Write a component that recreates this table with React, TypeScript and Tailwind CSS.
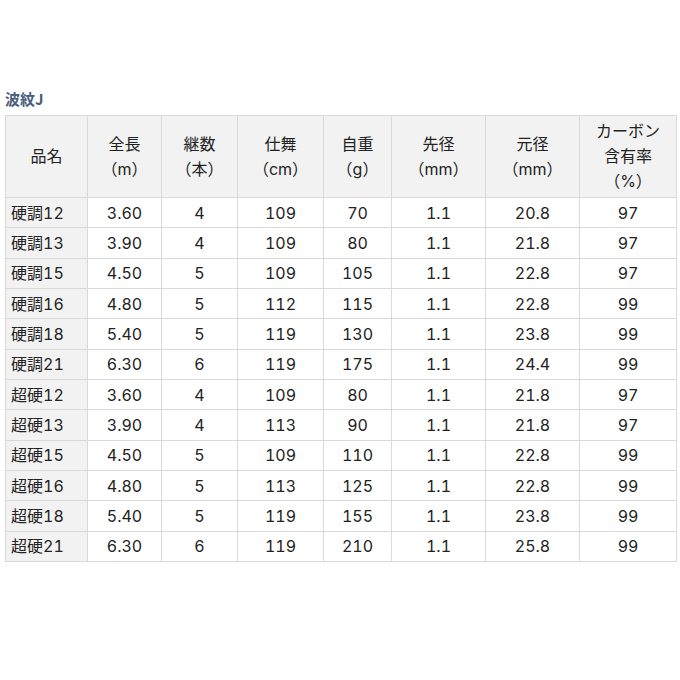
const rows = [
  ['硬調12', '3.60', '4', '109', '70', '1.1', '20.8', '97'],
  ['硬調13', '3.90', '4', '109', '80', '1.1', '21.8', '97'],
  ['硬調15', '4.50', '5', '109', '105', '1.1', '22.8', '97'],
  ['硬調16', '4.80', '5', '112', '115', '1.1', '22.8', '99'],
  ['硬調18', '5.40', '5', '119', '130', '1.1', '23.8', '99'],
  ['硬調21', '6.30', '6', '119', '175', '1.1', '24.4', '99'],
  ['超硬12', '3.60', '4', '109', '80', '1.1', '21.8', '97'],
  ['超硬13', '3.90', '4', '113', '90', '1.1', '21.8', '97'],
  ['超硬15', '4.50', '5', '109', '110', '1.1', '22.8', '99'],
  ['超硬16', '4.80', '5', '113', '125', '1.1', '22.8', '99'],
  ['超硬18', '5.40', '5', '119', '155', '1.1', '23.8', '99'],
  ['超硬21', '6.30', '6', '119', '210', '1.1', '25.8', '99'],
];

const headers: string[][] = [
  ['品名'],
  ['全長', '（m）'],
  ['継数', '（本）'],
  ['仕舞', '（cm）'],
  ['自重', '（g）'],
  ['先径', '（mm）'],
  ['元径', '（mm）'],
  ['カーボン', '含有率', '（%）'],
];

const widths = ['w-[82px]', 'w-[74px]', 'w-[76px]', 'w-[86px]', 'w-[68px]', 'w-[94px]', 'w-[94px]', 'w-[97px]'];

export default function App() {
  return (
    <div className="min-h-[680px] bg-white pt-[89px] pl-[5px] font-['Inter','Noto_Sans_CJK_JP',sans-serif] text-[#222]">
      <h2 className="mb-[6px] font-['Noto_Sans_CJK_JP',sans-serif] text-[15px] font-bold leading-[20px] text-[#4b5c7e]">
        波紋J
      </h2>
      <table className="w-[671px] table-fixed border-collapse text-[16px] tabular-nums">
        <colgroup>
          {widths.map((w, i) => (
            <col key={i} className={w} />
          ))}
        </colgroup>
        <thead>
          <tr className="h-[82px] bg-[#f2f2f2]">
            {headers.map((h, i) => (
              <th
                key={i}
                className="border border-[#d9d9d9] p-0 text-center align-middle font-normal leading-[25px]"
              >
                {h.map((line, j) => (
                  <div key={j}>{line}</div>
                ))}
              </th>
            ))}
          </tr>
        </thead>
        <tbody>
          {rows.map((r, i) => (
            <tr key={i} className="h-[30.33px]">
              {r.map((c, j) => (
                <td
                  key={j}
                  className={
                    j === 0
                      ? 'border border-[#d9d9d9] bg-[#f2f2f2] py-0 pl-[5px] text-left leading-[20px]'
                      : 'border border-[#d9d9d9] p-0 text-center leading-[20px]'
                  }
                >
                  {c}
                </td>
              ))}
            </tr>
          ))}
        </tbody>
      </table>
    </div>
  );
}
